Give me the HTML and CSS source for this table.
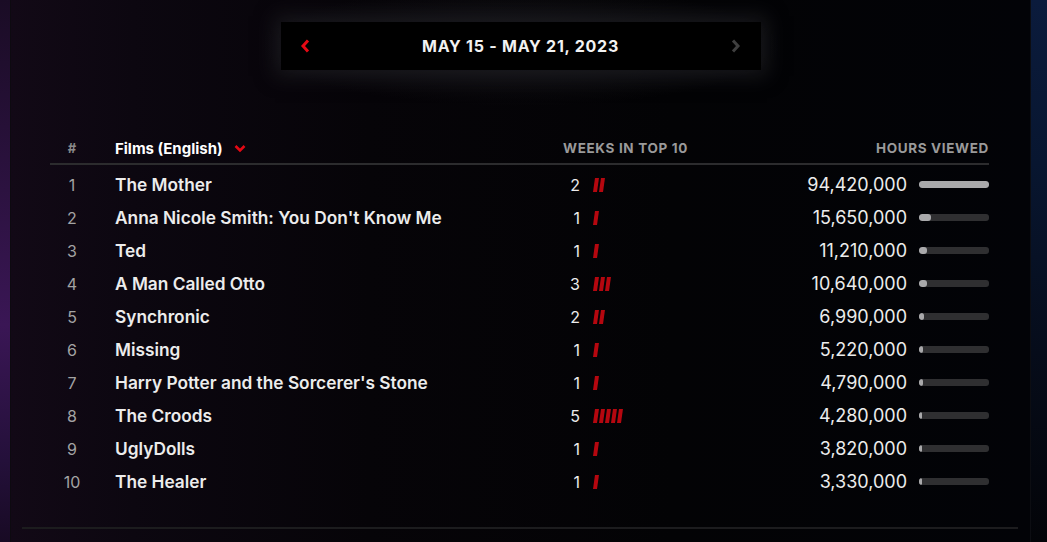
FILE: index.html
```html
<!DOCTYPE html>
<html lang="en">
<head>
<meta charset="utf-8">
<title>Top 10 Films (English)</title>
<link rel="stylesheet" href="styles.css">
</head>
<body>
<div class="frame">
  <div class="edge edge-left"></div>
  <main class="main">
    <div class="week-nav">
      <button class="nav-btn prev" aria-label="Previous week">
        <svg width="11" height="14" viewBox="0 0 11 14"><path d="M8 1.5 L3 7 L8 12.5" fill="none" stroke="#e50914" stroke-width="3" stroke-linejoin="miter"/></svg>
      </button>
      <div class="week-label">MAY 15 - MAY 21, 2023</div>
      <button class="nav-btn next" aria-label="Next week">
        <svg width="11" height="14" viewBox="0 0 11 14"><path d="M3 1.5 L8 7 L3 12.5" fill="none" stroke="#3f3f3f" stroke-width="3" stroke-linejoin="miter"/></svg>
      </button>
    </div>

    <div class="chart">
      <div class="row head">
        <div class="c-rank">#</div>
        <div class="c-title">Films (English)
          <svg class="caret" width="12" height="9" viewBox="0 0 12 9"><path d="M1.5 2 L6 6.5 L10.5 2" fill="none" stroke="#e50914" stroke-width="2.6"/></svg>
        </div>
        <div class="c-weeks">Weeks in Top 10</div>
        <div class="c-hours">Hours viewed</div>
      </div>

      <div class="rows">
        <div class="row">
          <div class="c-rank">1</div>
          <div class="c-title">The Mother</div>
          <div class="c-weeks"><span class="wk-num">2</span><span class="wk-bars"><i></i><i></i></span></div>
          <div class="c-hours"><span class="hrs">94,420,000</span><span class="meter"><span class="fill" style="width:100%"></span></span></div>
        </div>
        <div class="row">
          <div class="c-rank">2</div>
          <div class="c-title">Anna Nicole Smith: You Don't Know Me</div>
          <div class="c-weeks"><span class="wk-num">1</span><span class="wk-bars"><i></i></span></div>
          <div class="c-hours"><span class="hrs">15,650,000</span><span class="meter"><span class="fill" style="width:16.6%"></span></span></div>
        </div>
        <div class="row">
          <div class="c-rank">3</div>
          <div class="c-title">Ted</div>
          <div class="c-weeks"><span class="wk-num">1</span><span class="wk-bars"><i></i></span></div>
          <div class="c-hours"><span class="hrs">11,210,000</span><span class="meter"><span class="fill" style="width:11.9%"></span></span></div>
        </div>
        <div class="row">
          <div class="c-rank">4</div>
          <div class="c-title">A Man Called Otto</div>
          <div class="c-weeks"><span class="wk-num">3</span><span class="wk-bars"><i></i><i></i><i></i></span></div>
          <div class="c-hours"><span class="hrs">10,640,000</span><span class="meter"><span class="fill" style="width:11.3%"></span></span></div>
        </div>
        <div class="row">
          <div class="c-rank">5</div>
          <div class="c-title">Synchronic</div>
          <div class="c-weeks"><span class="wk-num">2</span><span class="wk-bars"><i></i><i></i></span></div>
          <div class="c-hours"><span class="hrs">6,990,000</span><span class="meter"><span class="fill" style="width:7.4%"></span></span></div>
        </div>
        <div class="row">
          <div class="c-rank">6</div>
          <div class="c-title">Missing</div>
          <div class="c-weeks"><span class="wk-num">1</span><span class="wk-bars"><i></i></span></div>
          <div class="c-hours"><span class="hrs">5,220,000</span><span class="meter"><span class="fill" style="width:5.5%"></span></span></div>
        </div>
        <div class="row">
          <div class="c-rank">7</div>
          <div class="c-title">Harry Potter and the Sorcerer's Stone</div>
          <div class="c-weeks"><span class="wk-num">1</span><span class="wk-bars"><i></i></span></div>
          <div class="c-hours"><span class="hrs">4,790,000</span><span class="meter"><span class="fill" style="width:5.1%"></span></span></div>
        </div>
        <div class="row">
          <div class="c-rank">8</div>
          <div class="c-title">The Croods</div>
          <div class="c-weeks"><span class="wk-num">5</span><span class="wk-bars"><i></i><i></i><i></i><i></i><i></i></span></div>
          <div class="c-hours"><span class="hrs">4,280,000</span><span class="meter"><span class="fill" style="width:4.5%"></span></span></div>
        </div>
        <div class="row">
          <div class="c-rank">9</div>
          <div class="c-title">UglyDolls</div>
          <div class="c-weeks"><span class="wk-num">1</span><span class="wk-bars"><i></i></span></div>
          <div class="c-hours"><span class="hrs">3,820,000</span><span class="meter"><span class="fill" style="width:4%"></span></span></div>
        </div>
        <div class="row">
          <div class="c-rank">10</div>
          <div class="c-title">The Healer</div>
          <div class="c-weeks"><span class="wk-num">1</span><span class="wk-bars"><i></i></span></div>
          <div class="c-hours"><span class="hrs">3,330,000</span><span class="meter"><span class="fill" style="width:3.5%"></span></span></div>
        </div>
      </div>
    </div>

    <div class="divider"></div>
  </main>
  <div class="edge edge-right"></div>
</div>
</body>
</html>
```

FILE: styles.css
```css
* { box-sizing: border-box; }

html, body {
  margin: 0;
  padding: 0;
  background: #000;
  height: 542px;
  overflow: hidden;
  font-family: "Inter", "Roboto", "Liberation Sans", sans-serif;
  color: #e5e5e5;
}

.frame {
  display: flex;
  height: 542px;
}

.edge { flex: none; }

.edge-left {
  width: 11px;
  border-right: 1px solid #0d0a10;
  background: linear-gradient(to bottom, #1a0c25 0%, #2c1240 35%, #3a1655 60%, #24103a 85%, #180a24 100%);
}

.edge-right {
  width: 17px;
  border-left: 1px solid #0c0d12;
  background: linear-gradient(to bottom, #0b1b3c 0%, #081630 30%, #060c1a 65%, #030408 100%);
}

.main {
  flex: 1;
  min-width: 0;
  padding-top: 22px;
  background:
    radial-gradient(ellipse 260px 60px at 50% 46px, rgba(60,60,66,0.35), rgba(0,0,0,0) 100%),
    linear-gradient(to right, #120916 0%, #0c0710 12%, #060408 35%, #030305 65%, #020307 100%);
}

/* week navigator */
.week-nav {
  width: 480px;
  height: 48px;
  margin: 0 auto;
  background: #000;
  display: flex;
  align-items: center;
  justify-content: space-between;
  padding: 0 19px 0 19px;
  box-shadow: 0 0 18px 6px rgba(30,30,34,0.75);
}

.nav-btn {
  background: none;
  border: 0;
  padding: 0;
  width: 12px;
  height: 16px;
  display: flex;
  align-items: center;
  justify-content: center;
}

.week-label {
  font-size: 16px;
  font-weight: 700;
  color: #f2f2f2;
  letter-spacing: 0.75px;
}

/* chart */
.chart {
  margin: 65px 41px 0 39px;
}

.row {
  display: grid;
  grid-template-columns: 65px 448px 160px 1fr;
  align-items: center;
  height: 33px;
}

.row.head {
  height: 30px;
  border-bottom: 2px solid #2c2c2e;
  padding-bottom: 2px;
}

.c-rank {
  width: 44px;
  text-align: center;
  color: #a3a3a3;
  font-size: 16px;
}

.head .c-rank {
  font-size: 13px;
  font-weight: 700;
  color: #8a8a8a;
}

.c-title {
  font-size: 17.3px;
  font-weight: 600;
  color: #ececec;
  white-space: nowrap;
}

.head .c-title {
  font-size: 15px;
  font-weight: 700;
  color: #fff;
  display: flex;
  align-items: center;
  gap: 11px;
}

.head .c-weeks,
.head .c-hours {
  font-size: 13.5px;
  font-weight: 700;
  color: #9a9a9a;
  text-transform: uppercase;
  letter-spacing: 0.65px;
}

.head .c-hours { text-align: right; }

.rows { padding-top: 3px; }

.c-weeks {
  display: flex;
  align-items: center;
}

.wk-num {
  width: 17px;
  text-align: right;
  font-size: 16px;
  color: #ececec;
}

.wk-bars {
  display: flex;
  gap: 2px;
  margin-left: 14px;
}

.wk-bars i {
  display: block;
  width: 4px;
  height: 14px;
  background: #b5070f;
  transform: skewX(-8deg);
}

.c-hours {
  display: flex;
  align-items: center;
  justify-content: flex-end;
}

.hrs {
  font-size: 18px;
  color: #ececec;
}

.meter {
  width: 70px;
  height: 7px;
  margin-left: 12px;
  border-radius: 3px;
  background: #2f2f31;
  overflow: hidden;
  display: block;
}

.meter .fill {
  display: block;
  height: 100%;
  min-width: 3px;
  border-radius: 3px;
  background: #a9a9ab;
}

.divider {
  margin: 29px 12px 0 11px;
  height: 2px;
  background: #1c1c1e;
}
```
